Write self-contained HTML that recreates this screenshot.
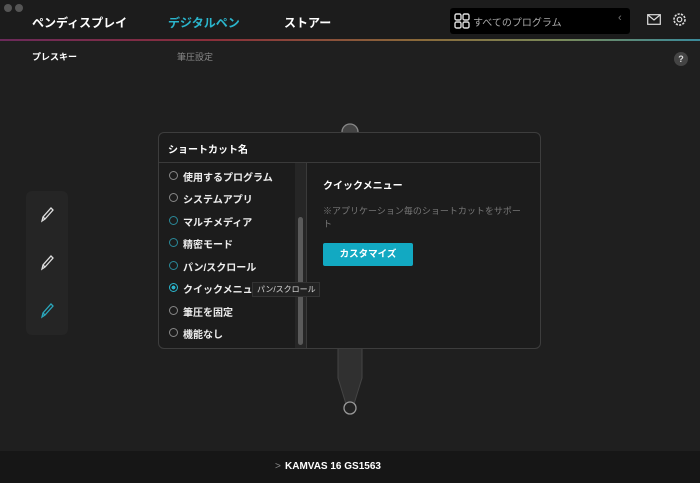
<!DOCTYPE html><html><head><meta charset="utf-8"><style>
*{margin:0;padding:0;box-sizing:border-box}
body{width:700px;height:483px;background:#1f1f1f;font-family:"Liberation Sans","Noto Sans CJK JP",sans-serif;color:#fff;position:relative;overflow:hidden}
.a{position:absolute;white-space:nowrap}
.top{position:absolute;left:0;top:0;width:700px;height:40px;background:#1c1c1c}
.line{position:absolute;left:0;top:39px;width:700px;height:2px;background:linear-gradient(90deg,#6b2a5a,#8a2e3a 30%,#8a6a3a 60%,#7a8a5a 80%,#3a8a9a)}
.dot{position:absolute;top:4px;width:8px;height:8px;border-radius:50%;background:#555}
.radio{position:absolute;left:169px;width:9px;height:9px;border-radius:50%;border:1.3px solid #888}
.rt{position:absolute;left:183px;font-size:10px;font-weight:bold;color:#eee}
</style></head><body>
<div class="top"></div><div class="line"></div>
<div class="dot" style="left:4px"></div><div class="dot" style="left:15px"></div>
<div class="a" style="left:32px;top:14px;font-size:12px;font-weight:bold">ペンディスプレイ</div>
<div class="a" style="left:168px;top:14px;font-size:12px;font-weight:bold;color:#2bb5cc">デジタルペン</div>
<div class="a" style="left:284px;top:14px;font-size:12px;font-weight:bold">ストアー</div>
<div class="a" style="left:450px;top:8px;width:180px;height:26px;background:#000;border-radius:3px"></div>
<svg class="a" style="left:454px;top:13px" width="16" height="16"><g fill="none" stroke="#ddd" stroke-width="1.4"><rect x="1" y="1" width="6" height="6" rx="1.5"/><rect x="9" y="1" width="6" height="6" rx="1.5"/><rect x="1" y="9" width="6" height="6" rx="1.5"/><rect x="9" y="9" width="6" height="6" rx="1.5"/></g></svg>
<div class="a" style="left:473px;top:14px;font-size:10px;color:#aaa">すべてのプログラム</div>
<div class="a" style="left:618px;top:12px;font-size:11px;color:#777">‹</div>
<svg class="a" style="left:647px;top:14px" width="14" height="11"><rect x=".7" y=".7" width="12.6" height="9.6" fill="none" stroke="#ddd" stroke-width="1.2"/><path d="M1 1l6 5 6-5" fill="none" stroke="#ddd" stroke-width="1.2"/></svg>
<svg class="a" style="left:672px;top:12px" width="15" height="15"><circle cx="7.5" cy="7.5" r="5.5" fill="none" stroke="#ddd" stroke-width="1.6" stroke-dasharray="2.2 1.2"/><circle cx="7.5" cy="7.5" r="2.3" fill="none" stroke="#ddd" stroke-width="1.2"/></svg>
<div class="a" style="left:32px;top:50px;font-size:9px;font-weight:bold">プレスキー</div>
<div class="a" style="left:177px;top:50px;font-size:9px;color:#888">筆圧設定</div>
<div class="a" style="left:674px;top:52px;width:14px;height:14px;border-radius:50%;background:#444;font-size:9px;text-align:center;line-height:14px;color:#ddd;font-weight:bold">?</div>
<div class="a" style="left:26px;top:191px;width:42px;height:144px;background:#252525;border-radius:6px"></div>
<svg class="a" style="left:38px;top:204px" width="18" height="120"><g fill="none" stroke-width="1.3"><path d="M4 17l1-4 8-9 2 2-8 9z M5 13l2 2" stroke="#ddd"/><path d="M4 65l1-4 8-9 2 2-8 9z M5 61l2 2" stroke="#ddd"/><path d="M4 113l1-4 8-9 2 2-8 9z M5 109l2 2" stroke="#2aa6bb"/></g></svg>
<svg class="a" style="left:330px;top:118px" width="40" height="300"><path d="M12 14a8 8 0 0 1 16 0" fill="#444" stroke="#888" stroke-width="1.3"/><path d="M13 230v30l4 30h6l4-30v-30z" fill="#2c2c2c"/><path d="M14 340" /></svg>
<svg class="a" style="left:330px;top:348px" width="40" height="70"><path d="M8 0v30l8 26h8l8-26V0z" fill="#303030" stroke="#444"/><circle cx="20" cy="60" r="6" fill="#222" stroke="#999" stroke-width="1.3"/></svg>
<div class="a" style="left:158px;top:132px;width:383px;height:217px;background:#1c1c1c;border:1px solid #3d3d3d;border-radius:6px"></div>
<div class="a" style="left:159px;top:162px;width:381px;height:1px;background:#3a3a3a"></div>
<div class="a" style="left:168px;top:141px;font-size:10px;font-weight:bold">ショートカット名</div>
<div class="a" style="left:295px;top:163px;width:12px;height:185px;background:#262626;border-right:1px solid #3a3a3a"></div>
<div class="a" style="left:298px;top:217px;width:5px;height:128px;background:#5a5a5a;border-radius:3px"></div>
<div class="radio" style="top:171px"></div><div class="rt" style="top:169px">使用するプログラム</div>
<div class="radio" style="top:193px"></div><div class="rt" style="top:191px">システムアプリ</div>
<div class="radio" style="top:216px;border-color:#2a8a9a"></div><div class="rt" style="top:214px">マルチメディア</div>
<div class="radio" style="top:238px;border-color:#2a8a9a"></div><div class="rt" style="top:236px">精密モード</div>
<div class="radio" style="top:261px;border-color:#2a8a9a"></div><div class="rt" style="top:259px">パン/スクロール</div>
<div class="radio" style="top:283px;border-color:#2ab5cc;background:radial-gradient(#2ab5cc 35%,transparent 40%)"></div><div class="rt" style="top:281px">クイックメニュー</div>
<div class="radio" style="top:306px"></div><div class="rt" style="top:304px">筆圧を固定</div>
<div class="radio" style="top:328px"></div><div class="rt" style="top:326px">機能なし</div>
<div class="a" style="left:252px;top:282px;width:68px;height:15px;background:#222;border:1px solid #333;font-size:8px;line-height:13px;padding-left:4px;color:#ddd">パン/スクロール</div>
<div class="a" style="left:323px;top:177px;font-size:10px;font-weight:bold">クイックメニュー</div>
<div class="a" style="left:323px;top:205px;font-size:9px;color:#777;line-height:13px">※アプリケーション毎のショートカットをサポー<br>ト</div>
<div class="a" style="left:323px;top:243px;width:90px;height:23px;background:#12a9c2;border-radius:2px;font-size:9.5px;font-weight:bold;text-align:center;line-height:23px">カスタマイズ</div>
<div class="a" style="left:0;top:451px;width:700px;height:32px;background:#161616"></div>
<div class="a" style="left:275px;top:461px;font-size:10px;color:#888">&gt;</div>
<div class="a" style="left:285px;top:461px;font-size:10px;font-weight:bold">KAMVAS 16 GS1563</div>
</body></html>
